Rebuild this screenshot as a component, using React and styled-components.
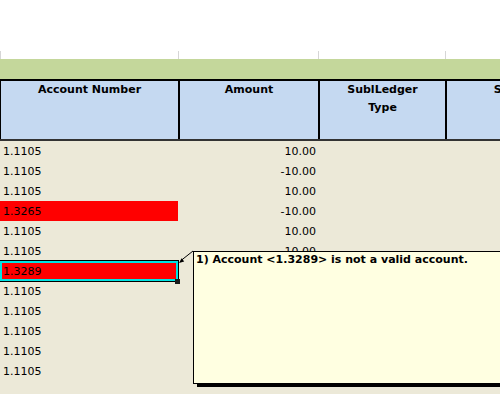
import React from 'react'
import styled, { createGlobalStyle } from 'styled-components'

const GlobalStyle = createGlobalStyle`
    html, body {
        margin: 0;
        padding: 0;
        background: #ffffff;
        overflow: hidden;
    }
    body {
        font-family: "DejaVu Sans", Tahoma, sans-serif;
        font-size: 11px;
        color: #000;
    }
`

const COLS = '178px 140px 127px 166px'

const Sheet = styled.div`
    width: 500px;
    height: 400px;
    overflow: hidden;
    display: flex;
    flex-direction: column;
`

const TopStrip = styled.div`
    display: grid;
    grid-template-columns: ${COLS};
    height: 59px;
    align-items: end;
`

const Tick = styled.div`
    height: 8px;
    border-left: 1px solid #d6d6d6;
`

const GreenBand = styled.div`
    height: 20px;
    background: #c4d79b;
    width: 611px;
`

const HeaderRow = styled.div`
    display: grid;
    grid-template-columns: ${COLS};
    height: 62px;
    box-sizing: border-box;
    border-top: 2px solid #000;
    border-bottom: 2px solid #333;
    background: #c5d9f1;
`

const HeaderCell = styled.div`
    border-left: ${p => (p.$first ? '1px' : '2px')} solid #000;
    font-weight: bold;
    text-align: center;
    line-height: 18px;
    white-space: nowrap;
    overflow: hidden;
`

const Body = styled.div`
    position: relative;
    height: 253px;
    width: 611px;
    background: #ece9d8;
`

const Row = styled.div`
    display: grid;
    grid-template-columns: ${COLS};
    height: 20px;
`

const Cell = styled.div`
    position: relative;
    box-sizing: border-box;
    height: 20px;
    padding: 2px ${p => (p.$right ? '2px' : '0')} 0 ${p => (p.$right ? '0' : '3px')};
    line-height: 18px;
    text-align: ${p => (p.$right ? 'right' : 'left')};
    background: ${p => (p.$error ? '#ff0000' : 'transparent')};
    white-space: nowrap;

    ${p => p.$selected && `
        &::after {
            content: '';
            position: absolute;
            top: -1px;
            left: 0;
            right: -1px;
            bottom: -1px;
            border: 1px solid #000;
            border-left: none;
            box-shadow: inset 0 0 0 2px #00e2e2;
        }
    `}
`

const FillHandle = styled.span`
    position: absolute;
    right: -2px;
    bottom: -3px;
    width: 5px;
    height: 5px;
    background: #1a1a1a;
    z-index: 2;
`

const Comment = styled.div`
    position: absolute;
    left: 193px;
    top: 110px;
    width: 330px;
    height: 133px;
    box-sizing: border-box;
    padding: 1px 0 0 2px;
    background: #ffffe1;
    border: 1px solid #000;
    box-shadow: 4px 3px 0 #000;
    font-weight: bold;
    line-height: 13px;
    white-space: nowrap;
    z-index: 3;
`

const Pointer = styled.svg`
    position: absolute;
    left: 176px;
    top: 108px;
    z-index: 4;
`

const rows = [
    { account: '1.1105', amount: '10.00' },
    { account: '1.1105', amount: '-10.00' },
    { account: '1.1105', amount: '10.00' },
    { account: '1.3265', amount: '-10.00', error: true },
    { account: '1.1105', amount: '10.00' },
    { account: '1.1105', amount: '10.00' },
    { account: '1.3289', amount: '-10.00', error: true, selected: true },
    { account: '1.1105', amount: '10.00' },
    { account: '1.1105', amount: '-10.00' },
    { account: '1.1105', amount: '10.00' },
    { account: '1.1105', amount: '-10.00' },
    { account: '1.1105', amount: '10.00' },
]

const headers = [
    ['Account Number'],
    ['Amount'],
    ['SublLedger', 'Type'],
    ['SublLedger', 'Code'],
]

export default function App() {
    return (
        <Sheet>
            <GlobalStyle />
            <TopStrip>
                {headers.map((_, i) => <Tick key={i} />)}
            </TopStrip>
            <GreenBand />
            <HeaderRow>
                {headers.map((lines, i) => (
                    <HeaderCell key={i} $first={i === 0}>
                        {lines.map(line => <div key={line}>{line}</div>)}
                    </HeaderCell>
                ))}
            </HeaderRow>
            <Body>
                {rows.map((r, i) => (
                    <Row key={i}>
                        <Cell $error={r.error} $selected={r.selected}>
                            {r.account}
                            {r.selected && <FillHandle />}
                        </Cell>
                        <Cell $right>{r.amount}</Cell>
                        <Cell />
                        <Cell />
                    </Row>
                ))}
                <Pointer width="20" height="18" viewBox="0 0 20 18">
                    <line x1="17" y1="2" x2="5" y2="11.5" stroke="#000" strokeWidth="1" />
                    <polygon points="3,14 8.2,12.6 5.6,9.2" fill="#000" />
                </Pointer>
                <Comment>1) Account &lt;1.3289&gt; is not a valid account.</Comment>
            </Body>
        </Sheet>
    )
}
